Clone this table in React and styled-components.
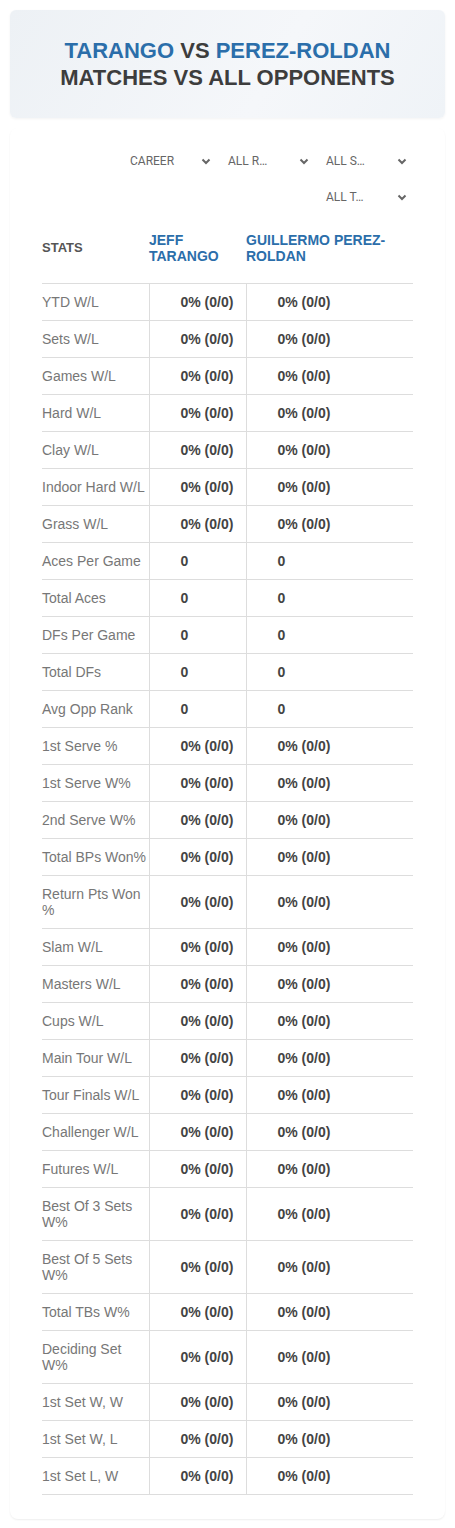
import React from "react";
import styled, { createGlobalStyle } from "styled-components";

const GlobalStyle = createGlobalStyle`
  body {
    margin: 0;
    background: #fff;
    font-family: "Liberation Sans", Arial, sans-serif;
  }
`;

const Page = styled.div`
  padding: 10px 10px 9px;
`;

const TitleCard = styled.div`
  height: 108px;
  border-radius: 6px;
  background: linear-gradient(120deg, #edf1f5 0%, #f5f7fa 60%, #eff3f7 100%);
  box-shadow: 0 1px 3px rgba(0, 0, 0, 0.05);
  display: flex;
  flex-direction: column;
  align-items: center;
  justify-content: center;
`;

const TitleLine = styled.h1`
  margin: 0;
  font-family: "Liberation Sans", Arial, sans-serif;
  font-size: 22px;
  line-height: 27px;
  font-weight: bold;
  color: #3d3d3d;
  text-align: center;
  text-transform: uppercase;
`;

const Player = styled.span`
  color: #2b6eaa;
`;

const Card = styled.div`
  margin-top: 10px;
  padding: 18px 32px 24px;
  border-radius: 8px;
  box-shadow: 0 1px 2px rgba(0, 0, 0, 0.07);
`;

const Filters = styled.div`
  display: flex;
  flex-wrap: wrap;
  justify-content: flex-end;
  row-gap: 6px;
`;

const Select = styled.div`
  width: 93px;
  height: 30px;
  margin-left: 5px;
  padding: 0 6px;
  box-sizing: border-box;
  display: flex;
  align-items: center;
  justify-content: space-between;
  font-family: Roboto, "Liberation Sans", sans-serif;
  font-size: 12px;
  color: #666;
  cursor: pointer;
`;

const SelectText = styled.span`
  white-space: nowrap;
`;

const Table = styled.table`
  width: 100%;
  margin-top: 6px;
  border-collapse: collapse;
  table-layout: fixed;
`;

const HeadCell = styled.th`
  padding: 14px 0 19px;
  text-align: left;
  vertical-align: middle;
  font-size: ${(p) => (p.$player ? "14px" : "13px")};
  line-height: 16px;
  font-weight: bold;
  text-transform: uppercase;
  color: ${(p) => (p.$player ? "#2b6eaa" : "#555")};
  border-bottom: 1px solid #ddd;
`;

const Row = styled.tr`
  border-bottom: 1px solid #ddd;
`;

const Label = styled.td`
  padding: 10px 0;
  font-size: 14px;
  line-height: 16px;
  color: #777;
  vertical-align: middle;
`;

const Value = styled.td`
  padding: 10px 0 10px 31px;
  font-size: 14px;
  line-height: 16px;
  font-weight: bold;
  color: #444;
  border-left: 1px solid #ddd;
  vertical-align: middle;
`;

const Chevron = () => (
  <svg width="10" height="7" viewBox="0 0 10 7">
    <polyline points="1.5,1.5 5,5 8.5,1.5" fill="none" stroke="#666" strokeWidth="2" />
  </svg>
);

const filters = ["CAREER", "ALL R…", "ALL S…", "ALL T…"];

const pct = "0% (0/0)";
const stats = [
  ["YTD W/L", pct],
  ["Sets W/L", pct],
  ["Games W/L", pct],
  ["Hard W/L", pct],
  ["Clay W/L", pct],
  ["Indoor Hard W/L", pct],
  ["Grass W/L", pct],
  ["Aces Per Game", "0"],
  ["Total Aces", "0"],
  ["DFs Per Game", "0"],
  ["Total DFs", "0"],
  ["Avg Opp Rank", "0"],
  ["1st Serve %", pct],
  ["1st Serve W%", pct],
  ["2nd Serve W%", pct],
  ["Total BPs Won%", pct],
  ["Return Pts Won %", pct],
  ["Slam W/L", pct],
  ["Masters W/L", pct],
  ["Cups W/L", pct],
  ["Main Tour W/L", pct],
  ["Tour Finals W/L", pct],
  ["Challenger W/L", pct],
  ["Futures W/L", pct],
  ["Best Of 3 Sets W%", pct],
  ["Best Of 5 Sets W%", pct],
  ["Total TBs W%", pct],
  ["Deciding Set W%", pct],
  ["1st Set W, W", pct],
  ["1st Set W, L", pct],
  ["1st Set L, W", pct],
];

export default function App() {
  return (
    <Page>
      <GlobalStyle />
      <TitleCard>
        <TitleLine>
          <Player>Tarango</Player> vs <Player>Perez-Roldan</Player>
        </TitleLine>
        <TitleLine>Matches vs all opponents</TitleLine>
      </TitleCard>

      <Card>
        <Filters>
          {filters.map((f) => (
            <Select key={f}>
              <SelectText>{f}</SelectText>
              <Chevron />
            </Select>
          ))}
        </Filters>

        <Table>
          <colgroup>
            <col style={{ width: 107 }} />
            <col style={{ width: 97 }} />
            <col />
          </colgroup>
          <thead>
            <tr>
              <HeadCell>Stats</HeadCell>
              <HeadCell $player>Jeff Tarango</HeadCell>
              <HeadCell $player>Guillermo Perez-Roldan</HeadCell>
            </tr>
          </thead>
          <tbody>
            {stats.map(([label, val]) => (
              <Row key={label}>
                <Label>{label}</Label>
                <Value>{val}</Value>
                <Value>{val}</Value>
              </Row>
            ))}
          </tbody>
        </Table>
      </Card>
    </Page>
  );
}
